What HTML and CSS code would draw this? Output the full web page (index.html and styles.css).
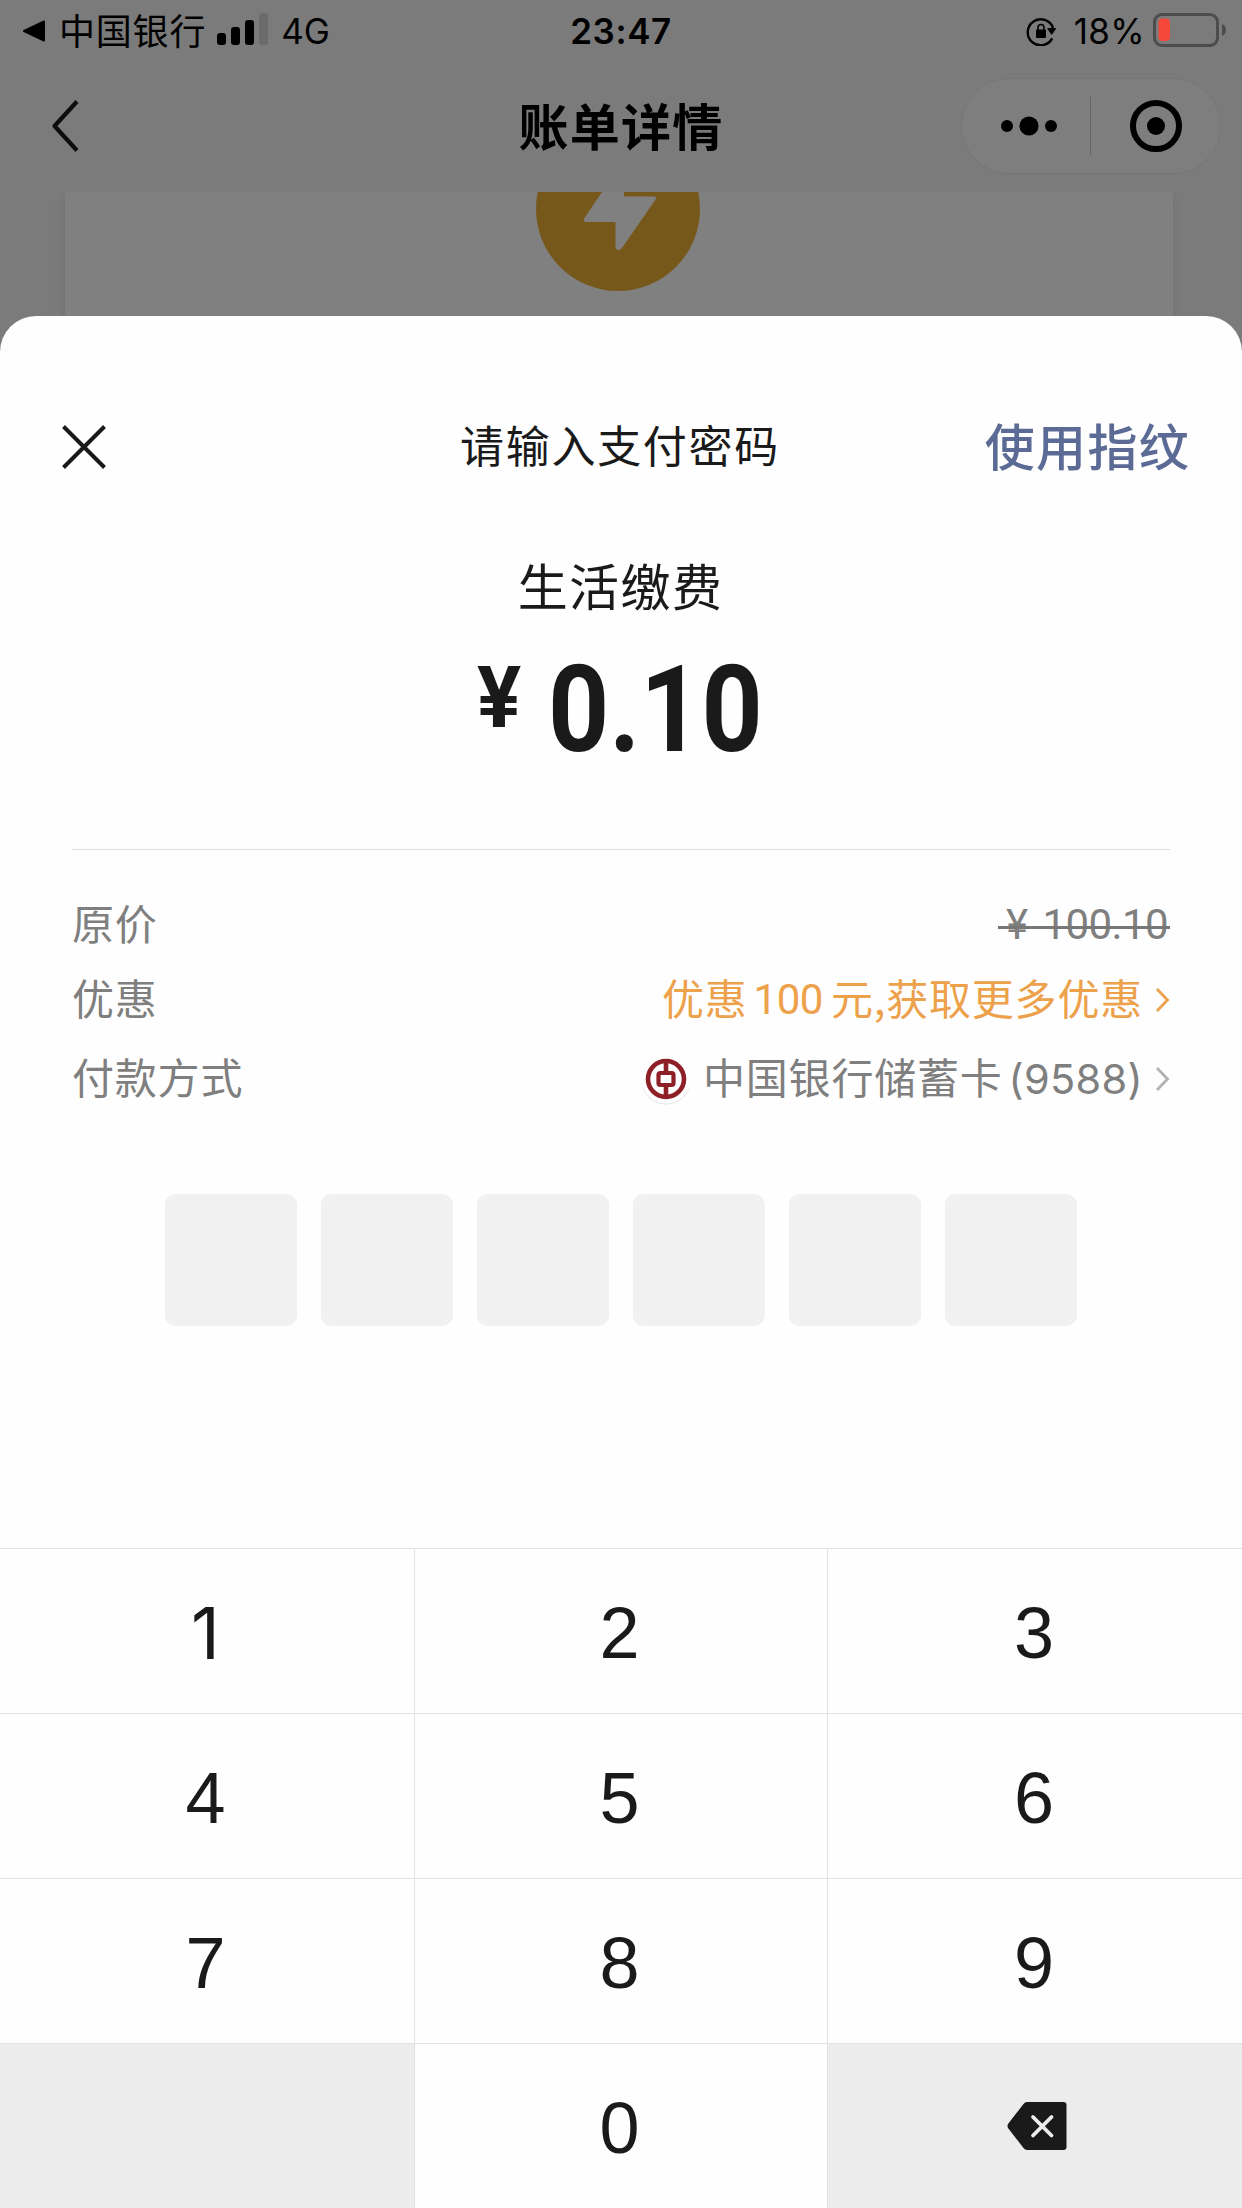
FILE: index.html
```html
<!DOCTYPE html>
<html lang="zh-CN">
<head>
<meta charset="utf-8">
<title>账单详情</title>
<link rel="stylesheet" href="styles.css">
</head>
<body>
<div class="screen">
  <header class="header">
    <div class="status">
      <div class="status-left">
        <svg class="icon-back-app" width="24" height="24" viewBox="0 0 24 24"><path d="M2 12 22 2.5V21.5Z" stroke="#000" stroke-width="2" stroke-linejoin="round"/></svg>
        <span class="carrier">中国银行</span>
        <svg class="icon-signal" width="52" height="34" viewBox="0 0 52 34"><rect x="0" y="21" width="9" height="12" rx="3"/><rect x="14" y="15" width="9" height="18" rx="3"/><rect x="28" y="8" width="9" height="25" rx="3"/><rect x="42" y="1" width="9" height="32" rx="3" fill="#6b6b6b"/></svg>
        <span class="network">4G</span>
      </div>
      <time class="clock">23:47</time>
      <div class="status-right">
        <svg class="icon-lock" width="34" height="30" viewBox="0 0 34 30"><path d="M27.2 22.4A13 13 0 1 1 28 12" fill="none" stroke="#000" stroke-width="2.4"/><path d="M22.7 12.6h8L26.7 18.3Z" stroke="#000" stroke-linejoin="round"/><rect x="11" y="13.5" width="10" height="8.5" rx="1"/><path d="M13 14V11.5a3 3 0 0 1 6 0V14" fill="none" stroke="#000" stroke-width="1.6"/></svg>
        <span class="percent">18%</span>
        <svg class="icon-battery" width="74" height="36" viewBox="0 0 74 36"><rect x="1.5" y="2.5" width="63" height="31" rx="7.5" fill="none" stroke="#4c4c4c" stroke-width="3"/><rect x="5.5" y="6.5" width="11.5" height="22.5" rx="4" fill="#f5473a"/><path d="M69 12v12q4-1.500 4-6t-4-6Z" fill="#4c4c4c"/></svg>
      </div>
    </div>
    <nav class="nav">
      <svg class="nav-back" width="30" height="54" viewBox="0 0 30 54"><path d="M27 2.500 4.500 27 27 51.500" fill="none" stroke="#0d0d0d" stroke-width="4.200" stroke-linejoin="round"/></svg>
      <h1 class="nav-title">账单详情</h1>
      <div class="capsule">
        <svg class="capsule-more" width="60" height="22" viewBox="0 0 60 22"><circle cx="7" cy="11" r="6"/><circle cx="29" cy="11" r="9.600"/><circle cx="51" cy="11" r="6"/></svg>
        <span class="capsule-line"></span>
        <svg class="capsule-close" width="54" height="54" viewBox="0 0 54 54"><circle cx="27" cy="27" r="23" fill="none" stroke="#000" stroke-width="6"/><circle cx="27" cy="27" r="9"/></svg>
      </div>
    </nav>
  </header>
  <section class="bill">
    <svg class="bill-icon" width="164" height="100" viewBox="0 0 164 100"><circle cx="82" cy="17" r="82" fill="#76581b"/><path d="M66 0H88V4.500H119q2 1 .5 3L86 56q-4 4-6.500 0V30H49q-2-1.500-.500-4Z" fill="#808080"/></svg>
  </section>

  <main class="sheet">
    <div class="sheet-head">
      <svg class="sheet-close" width="44" height="44" viewBox="0 0 44 44"><path d="M1.500 1.500 42.500 42.500M42.500 1.500 1.500 42.500" stroke="#1a1a1a" stroke-width="4"/></svg>
      <h2 class="sheet-title">请输入支付密码</h2>
      <a class="sheet-link">使用指纹</a>
    </div>
    <div class="payee">生活缴费</div>
    <div class="amount"><span class="yen">¥</span><span class="value">0.10</span></div>
    <div class="details">
      <div class="row row-price"><span class="zh">原价</span><span class="old-price"><span class="old-yen">¥</span>100.10</span></div>
      <div class="row row-offer"><span class="zh">优惠</span><span class="offer"><span class="zh">优惠</span><span class="num">100</span><span class="zh">元,获取更多优惠</span><svg class="chevron" width="15" height="26" viewBox="0 0 15 26"><path d="M2 2 12.500 13 2 24" fill="none" stroke="#eda14b" stroke-width="2.800"/></svg></span></div>
      <div class="row row-method"><span class="zh">付款方式</span><span class="method"><svg class="bank" width="52" height="60" viewBox="0 0 52 60"><path d="M3 40a25 25 0 0 0 46 0" fill="none" stroke="#e6e6e6"/><g fill="none" stroke="#8f1f27"><circle cx="26" cy="30" r="18" stroke-width="4.600"/><rect x="18.500" y="24" width="15" height="12" rx="2" stroke-width="4.200"/><path d="M26 12V23M26 37V48" stroke-width="4.600"/></g></svg><span class="zh">中国银行储蓄卡</span><span class="card-no">(9588)</span><svg class="chevron" width="15" height="26" viewBox="0 0 15 26"><path d="M2 2 12.500 13 2 24" fill="none" stroke="#b2b2b2" stroke-width="2.800"/></svg></span></div>
    </div>
    <div class="code"><i></i><i></i><i></i><i></i><i></i><i></i></div>
    <div class="keypad">
      <button class="one">1</button><button>2</button><button>3</button>
      <button>4</button><button>5</button><button>6</button>
      <button>7</button><button>8</button><button>9</button>
      <button class="gray"></button><button>0</button>
      <button class="gray"><svg class="backspace" width="60" height="48" viewBox="0 0 60 48"><path d="M20 0H56.500Q59.500 0 59.500 3V45Q59.500 48 56.500 48H20Q18 48 16.500 46L1 26Q0 24 1 22L16.500 2Q18 0 20 0Z" fill="#1a1a1a"/><path d="M26 15 44.500 33.500M44.500 15 26 33.500" stroke="#ededed" stroke-width="3.800" stroke-linecap="round"/></svg></button>
    </div>
  </main>
</div>
</body>
</html>
```
FILE: styles.css
```css
* { box-sizing: border-box; }
body { margin: 0; }
svg { display: block; flex: none; }
h1, h2 { margin: 0; }

.screen {
  position: relative;
  width: 1242px;
  height: 2208px;
  overflow: hidden;
  background: #7b7b7b;
  color: #1a1a1a;
  font-family: Inter, "Noto Sans CJK SC", sans-serif;
}

/* status bar and navigation */
.header { height: 192px; color: #000; }
.status {
  display: grid;
  grid-template-columns: 1fr 160px 1fr;
  align-items: center;
  height: 62px;
  font-size: 35px;
  line-height: 62px;
}
.status-left, .status-right { display: flex; align-items: center; }
.status-left { padding-left: 22px; }
.status-right { justify-content: flex-end; padding-right: 15px; }
.carrier {
  margin-left: 13px;
  padding-bottom: 4px;
  font: 36px/58px "Noto Sans CJK SC", sans-serif;
  letter-spacing: .8px;
}
.icon-signal { margin-left: 11px; margin-top: -4px; }
.network { margin-left: 12px; }
.clock { text-align: center; font-weight: 600; letter-spacing: .6px; }
.percent { margin: 0 8px 0 15px; letter-spacing: .3px; }
.icon-battery { margin-top: -2px; }

.nav {
  display: grid;
  grid-template-columns: 1fr 240px 1fr;
  align-items: center;
  height: 128px;
}
.nav-back { margin-left: 50px; }
.nav-title {
  padding-bottom: 5px;
  text-align: center;
  font: 700 50px/72px "Noto Sans CJK SC", sans-serif;
  letter-spacing: 1.3px;
  white-space: nowrap;
}
.capsule {
  justify-self: end;
  display: flex;
  align-items: center;
  width: 260px;
  height: 96px;
  margin-right: 21px;
  padding-left: 38px;
  border: 1px solid #767676;
  border-radius: 48px;
  background: #7e7e7e;
}
.capsule-line { width: 1px; height: 58px; margin: 0 38px 0 30px; background: #656565; }

.bill {
  display: flex;
  width: 1108px;
  height: 160px;
  margin-left: 65px;
  background: #808080;
  box-shadow: 0 4px 8px #707070;
  clip-path: inset(0 -12px 0 -12px);
}
.bill-icon { margin-left: 471px; }

/* payment sheet */
.sheet {
  position: absolute;
  inset: 316px 0 0;
  display: flex;
  flex-direction: column;
  background: #fefefe;
  border-radius: 36px 36px 0 0;
  font-family: "Noto Sans CJK SC", sans-serif;
}
.sheet-head {
  display: grid;
  grid-template-columns: 1fr 340px 1fr;
  align-items: center;
  height: 80px;
  margin-top: 91px;
  padding: 0 52px 0 62px;
}
.sheet-title {
  padding: 0 12px 5px 0;
  text-align: center;
  font-size: 44px;
  font-weight: 400;
  letter-spacing: 1.7px;
  line-height: 75px;
  white-space: nowrap;
}
.sheet-link {
  justify-self: end;
  padding-bottom: 5px;
  color: #5b6b95;
  font-size: 50px;
  font-weight: 500;
  letter-spacing: 1.3px;
  line-height: 75px;
}
.payee {
  height: 80px;
  margin-top: 57px;
  padding-right: 1px;
  text-align: center;
  font-size: 50px;
  letter-spacing: 1.4px;
  line-height: 80px;
}
.amount {
  display: flex;
  height: 120px;
  margin-top: 26px;
  padding-left: 477px;
  font-family: Roboto, sans-serif;
  font-weight: 700;
}
.yen { width: 71px; font-size: 85px; line-height: 96px; transform: scaleX(.97); transform-origin: 0 0; }
.value {
  font-size: 120px;
  line-height: 120px;
  transform: scaleX(.89);
  transform-origin: 0 0;
}
.details {
  width: 1098px;
  height: 274px;
  margin: 79px 0 0 72px;
  border-top: 1px solid #dfdfdf;
  color: #7f7f7f;
  font-size: 42px;
  letter-spacing: .8px;
}
.row { display: flex; justify-content: space-between; align-items: center; white-space: nowrap; line-height: 70px; }
.row-price { height: 75px; margin-top: 37px; }
.row-offer { height: 76px; }
.row-method { height: 82px; }
.zh { padding-bottom: 6px; }
.old-price {
  position: relative;
  padding: 0 2px 0 8px;
  font-family: Roboto, sans-serif;
  letter-spacing: -.6px;
}
.old-price::after {
  content: "";
  position: absolute;
  left: 0; right: 0; top: 36px;
  height: 3px;
  background: #777;
}
.old-yen { margin-right: 15px; }
.offer, .method { display: flex; align-items: center; }
.offer { color: #eda14b; }
.num { margin: 0 8px 0 6px; font-family: Roboto, sans-serif; letter-spacing: -.5px; }
.chevron { margin-left: 12px; }
.bank { margin-right: 11px; }
.card-no { margin-left: 6px; font-family: Inter, sans-serif; font-size: 41.5px; letter-spacing: .3px; }

.code { display: flex; gap: 24px; margin: 71px 0 0 165px; }
.code i { width: 132px; height: 132px; border-radius: 11px; background: #f1f1f1; }

.keypad {
  display: grid;
  grid-template-columns: 415px 413px 414px;
  grid-auto-rows: 165px;
  height: 660px;
  margin-top: auto;
}
.keypad button {
  display: flex;
  align-items: center;
  justify-content: center;
  padding: 4px 3px 0 0;
  border: 0 solid #e2e2e2;
  border-width: 1px 1px 0 0;
  background: #fefefe;
  color: #1a1a1a;
  font: 72px/1 "Liberation Sans", sans-serif;
}
.keypad button:nth-child(3n+2) { padding-right: 3px; }
.keypad button:nth-child(3n) { padding-right: 2px; border-right: 0; }
.keypad .one { font-family: Inter, sans-serif; font-size: 71px; }
.keypad .gray { background: #ececec; }
.backspace { margin: -5px 0 0 5px; }
```
